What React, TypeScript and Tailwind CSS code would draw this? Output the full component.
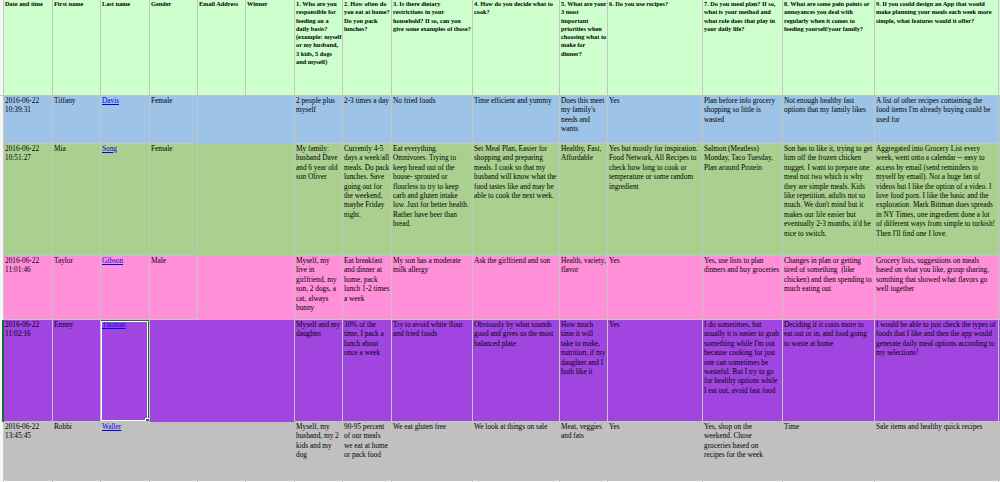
import clsx from "clsx";

const widths = [
  "w-[49px]", "w-[48px]", "w-[49px]", "w-[48px]", "w-[48px]", "w-[49px]", "w-[48px]", "w-[49px]",
  "w-[81px]", "w-[87px]", "w-[48px]", "w-[95px]", "w-[80px]", "w-[92px]", "w-[124px]", "w-[120px]",
];

// line breaks are kept as they appear in the sheet
const header = [
  "Date and time",
  "First name",
  "Last name",
  "Gender",
  "Email Address",
  "Winner",
  "1. Who are you\nresponsible for\nfeeding on a\ndaily basis?\n(example: myself\nor my husband,\n3 kids, 5 dogs\nand myself)",
  "2. How often do\nyou eat at home?\nDo you pack\nlunches?",
  "3. Is there dietary\nrestrictions in your\nhousehold? If so, can you\ngive some examples of those?",
  "4. How do you decide what to\ncook?",
  "5. What are your\n3 most\nimportant\npriorities when\nchoosing what to\nmake for\ndinner?",
  "6. Do you use recipes?",
  "7. Do you meal plan? If so,\nwhat is your method and\nwhat role does that play in\nyour daily life?",
  "8. What are some pain points or\nannoyances you deal with\nregularly when it comes to\nfeeding yourself/your family?",
  "9. If you could design an App that would\nmake planning your meals each week more\nsimple, what features would it offer?",
  " ",
];

type Row = { bg: string; h: string; cells: string[]; selected?: boolean };

const rows: Row[] = [
  {
    bg: "bg-[#9dc3e7]",
    h: "h-[48px]",
    cells: [
      "2016-06-22\n10:39:31", "Tiffany", "Davis", "Female", "", "",
      "2 people plus\nmyself",
      "2-3 times a day",
      "No fried foods",
      "Time efficient and yummy",
      "Does this meet\nmy family's\nneeds and\nwants",
      "Yes",
      "Plan before info grocery\nshopping so little is\nwasted",
      "Not enough healthy fast\noptions that my family likes",
      "A list of other recipes containing the\nfood items I'm already buying could be\nused for",
      " ",
    ],
  },
  {
    bg: "bg-[#a9d08f]",
    h: "h-[112px]",
    cells: [
      "2016-06-22\n10:51:27", "Mia", "Song", "Female", "", "",
      "My family:\nhusband Dave\nand 6 year old\nson Oliver",
      "Currently 4-5\ndays a week/all\nmeals. Do pack\nlunches. Save\ngoing out for\nthe weekend,\nmaybe Friday\nnight.",
      "Eat everything.\nOmnivores. Trying to\nkeep bread out of the\nhouse- sprouted or\nflourless to try to keep\ncarb and gluten intake\nlow. Just for better health.\nRather have beer than\nbread.",
      "Set Meal Plan, Easier for\nshopping and preparing\nmeals. I cook so that my\nhusband will know what the\nfood tastes like and may be\nable to cook the next week.",
      "Healthy, Fast,\nAffordable",
      "Yes but mostly for inspiration.\nFood Network, All Recipes to\ncheck how long to cook or\ntemperature or some random\ningredient",
      "Salmon (Meatless)\nMonday, Taco Tuesday,\nPlan around Protein",
      "Son has to like it, trying to get\nhim off the frozen chicken\nnugget. I want to prepare one\nmeal not two which is why\nthey are simple meals. Kids\nlike repetition, adults not so\nmuch. We don't mind but it\nmakes our life easier but\neventually 2-3 months, it'd be\nnice to switch.",
      "Aggregated into Grocery List every\nweek, went onto a calendar -- easy to\naccess by email (send reminders to\nmyself by email). Not a huge fan of\nvideos but I like the option of a video. I\nlove food porn. I like the basic and the\nexploration. Mark Bittman does spreads\nin NY Times, one ingredient done a lot\nof different ways from simple to turkish!\nThen I'll find one I love.",
      " ",
    ],
  },
  {
    bg: "bg-[#ff8fd9]",
    h: "h-[64px]",
    cells: [
      "2016-06-22\n11:01:46", "Taylor", "Gibson", "Male", "", "",
      "Myself, my\nlive in\ngirlfriend, my\nson, 2 dogs, a\ncat, always\nbunny",
      "Eat breakfast\nand dinner at\nhome, pack\nlunch 1-2 times\na week",
      "My son has a moderate\nmilk allergy",
      "Ask the girlfriend and son",
      "Health, variety,\nflavor",
      "Yes",
      "Yes, use lists to plan\ndinners and buy groceries",
      "Changes in plan or getting\ntired of something  (like\nchicken) and then spending to\nmuch eating out",
      "Grocery lists, suggestions on meals\nbased on what you like, group sharing,\nsomthing that showed what flavors go\nwell together",
      " ",
    ],
  },
  {
    bg: "bg-[#a045e0]",
    h: "h-[102px]",
    selected: true,
    cells: [
      "2016-06-22\n11:02:16", "Emmy", "Thomas", "", "", "",
      "Myself and my\ndaughter",
      "30% of the\ntime, I pack a\nlunch about\nonce a week",
      "Try to avoid white flour\nand fried foods",
      "Obviously by what sounds\ngood and gives us the most\nbalanced plate",
      "How much\ntime it will\ntake to make,\nnutrition, if my\ndaughter and I\nboth like it",
      "Yes",
      "I do sometimes, but\nusually it is easier to grab\nsomething while I'm out\nbecause cooking for just\none can sometimes be\nwasteful. But I try to go\nfor healthy options while\nI eat out, avoid fast food",
      "Deciding if it costs more to\neat out or in, and food going\nto waste at home",
      "I would be able to just check the types of\nfoods that I like and then the app would\ngenerate daily meal options according to\nmy selections!",
      " ",
    ],
  },
  {
    bg: "bg-[#c0c0c0]",
    h: "h-[59px]",
    cells: [
      "2016-06-22\n13:45:45", "Robbi", "Waller", "", "", "",
      "Myself, my\nhusband, my 2\nkids and my\ndog",
      "90-95 percent\nof our meals\nwe eat at home\nor pack food",
      "We eat gluten free",
      "We look at things on sale",
      "Meat, veggies\nand fats",
      "Yes",
      "Yes, shop on the\nweekend. Chose\ngroceries based on\nrecipes for the week",
      "Time",
      "Sale items and healthy quick recipes",
      " ",
    ],
  },
];

function DataRow({ row, below }: { row: Row; below?: Row }) {
  return (
    <div className={clsx("flex", row.h)}>
      <div className="relative w-[4px] shrink-0 border-r border-[#c4c4c4] bg-[#f6f6f6]">
        {row.selected && <div className="absolute left-[2px] top-0 bottom-0 w-[2px] bg-[#1b6b3a]" />}
      </div>
      {row.cells.map((text, i) => {
        const filled = text !== "";
        const rightLine = filled || (row.cells[i + 1] ?? "") !== "";
        const bottomLine = filled || !below || (below.cells[i] ?? "") !== "";
        return (
          <div
            key={i}
            className={clsx(
              "relative shrink-0 overflow-hidden whitespace-pre pl-[1px] text-[7.3px] leading-[9.4px] text-black",
              widths[i],
              row.bg,
              "border-r border-b",
              rightLine ? "border-r-[#c4c4c4]" : "border-r-transparent",
              bottomLine ? "border-b-[#c4c4c4]" : "border-b-transparent"
            )}
          >
            {i === 2 ? <span className="text-[#0000ee] underline">{text}</span> : text}
            {row.selected && i === 2 && (
              <div className="absolute -left-[2px] -top-[1px] -right-[1px] -bottom-[2px] z-10 border-2 border-[#1b6b3a] shadow-[inset_0_0_0_1px_#ffffff]">
                <div className="absolute -right-[4px] -bottom-[4px] h-[7px] w-[7px] border border-white bg-[#1b6b3a]" />
              </div>
            )}
          </div>
        );
      })}
    </div>
  );
}

export default function App() {
  return (
    <div className="h-[482px] w-[1000px] overflow-hidden bg-white" style={{ fontFamily: '"Liberation Serif", "Times New Roman", serif' }}>
      <div className="flex h-[96px]">
        <div className="w-[4px] shrink-0 border-r border-b border-[#c4c4c4] bg-[#f6f6f6]" />
        {header.map((text, i) => (
          <div
            key={i}
            className={clsx(
              "shrink-0 overflow-hidden whitespace-pre border-r border-b border-[#c4c4c4] bg-[#ccffcc] pl-[1px] text-[6.3px] font-bold leading-[8.3px] text-black",
              widths[i]
            )}
          >
            {text}
          </div>
        ))}
      </div>
      {rows.map((row, r) => (
        <DataRow key={r} row={row} below={rows[r + 1]} />
      ))}
      <div className="flex h-[20px]">
        <div className="w-[4px] shrink-0 border-r border-[#dadada] bg-[#f6f6f6]" />
        {widths.map((w, i) => (
          <div key={i} className={clsx("shrink-0 border-r border-[#dadada]", w)} />
        ))}
      </div>
    </div>
  );
}
